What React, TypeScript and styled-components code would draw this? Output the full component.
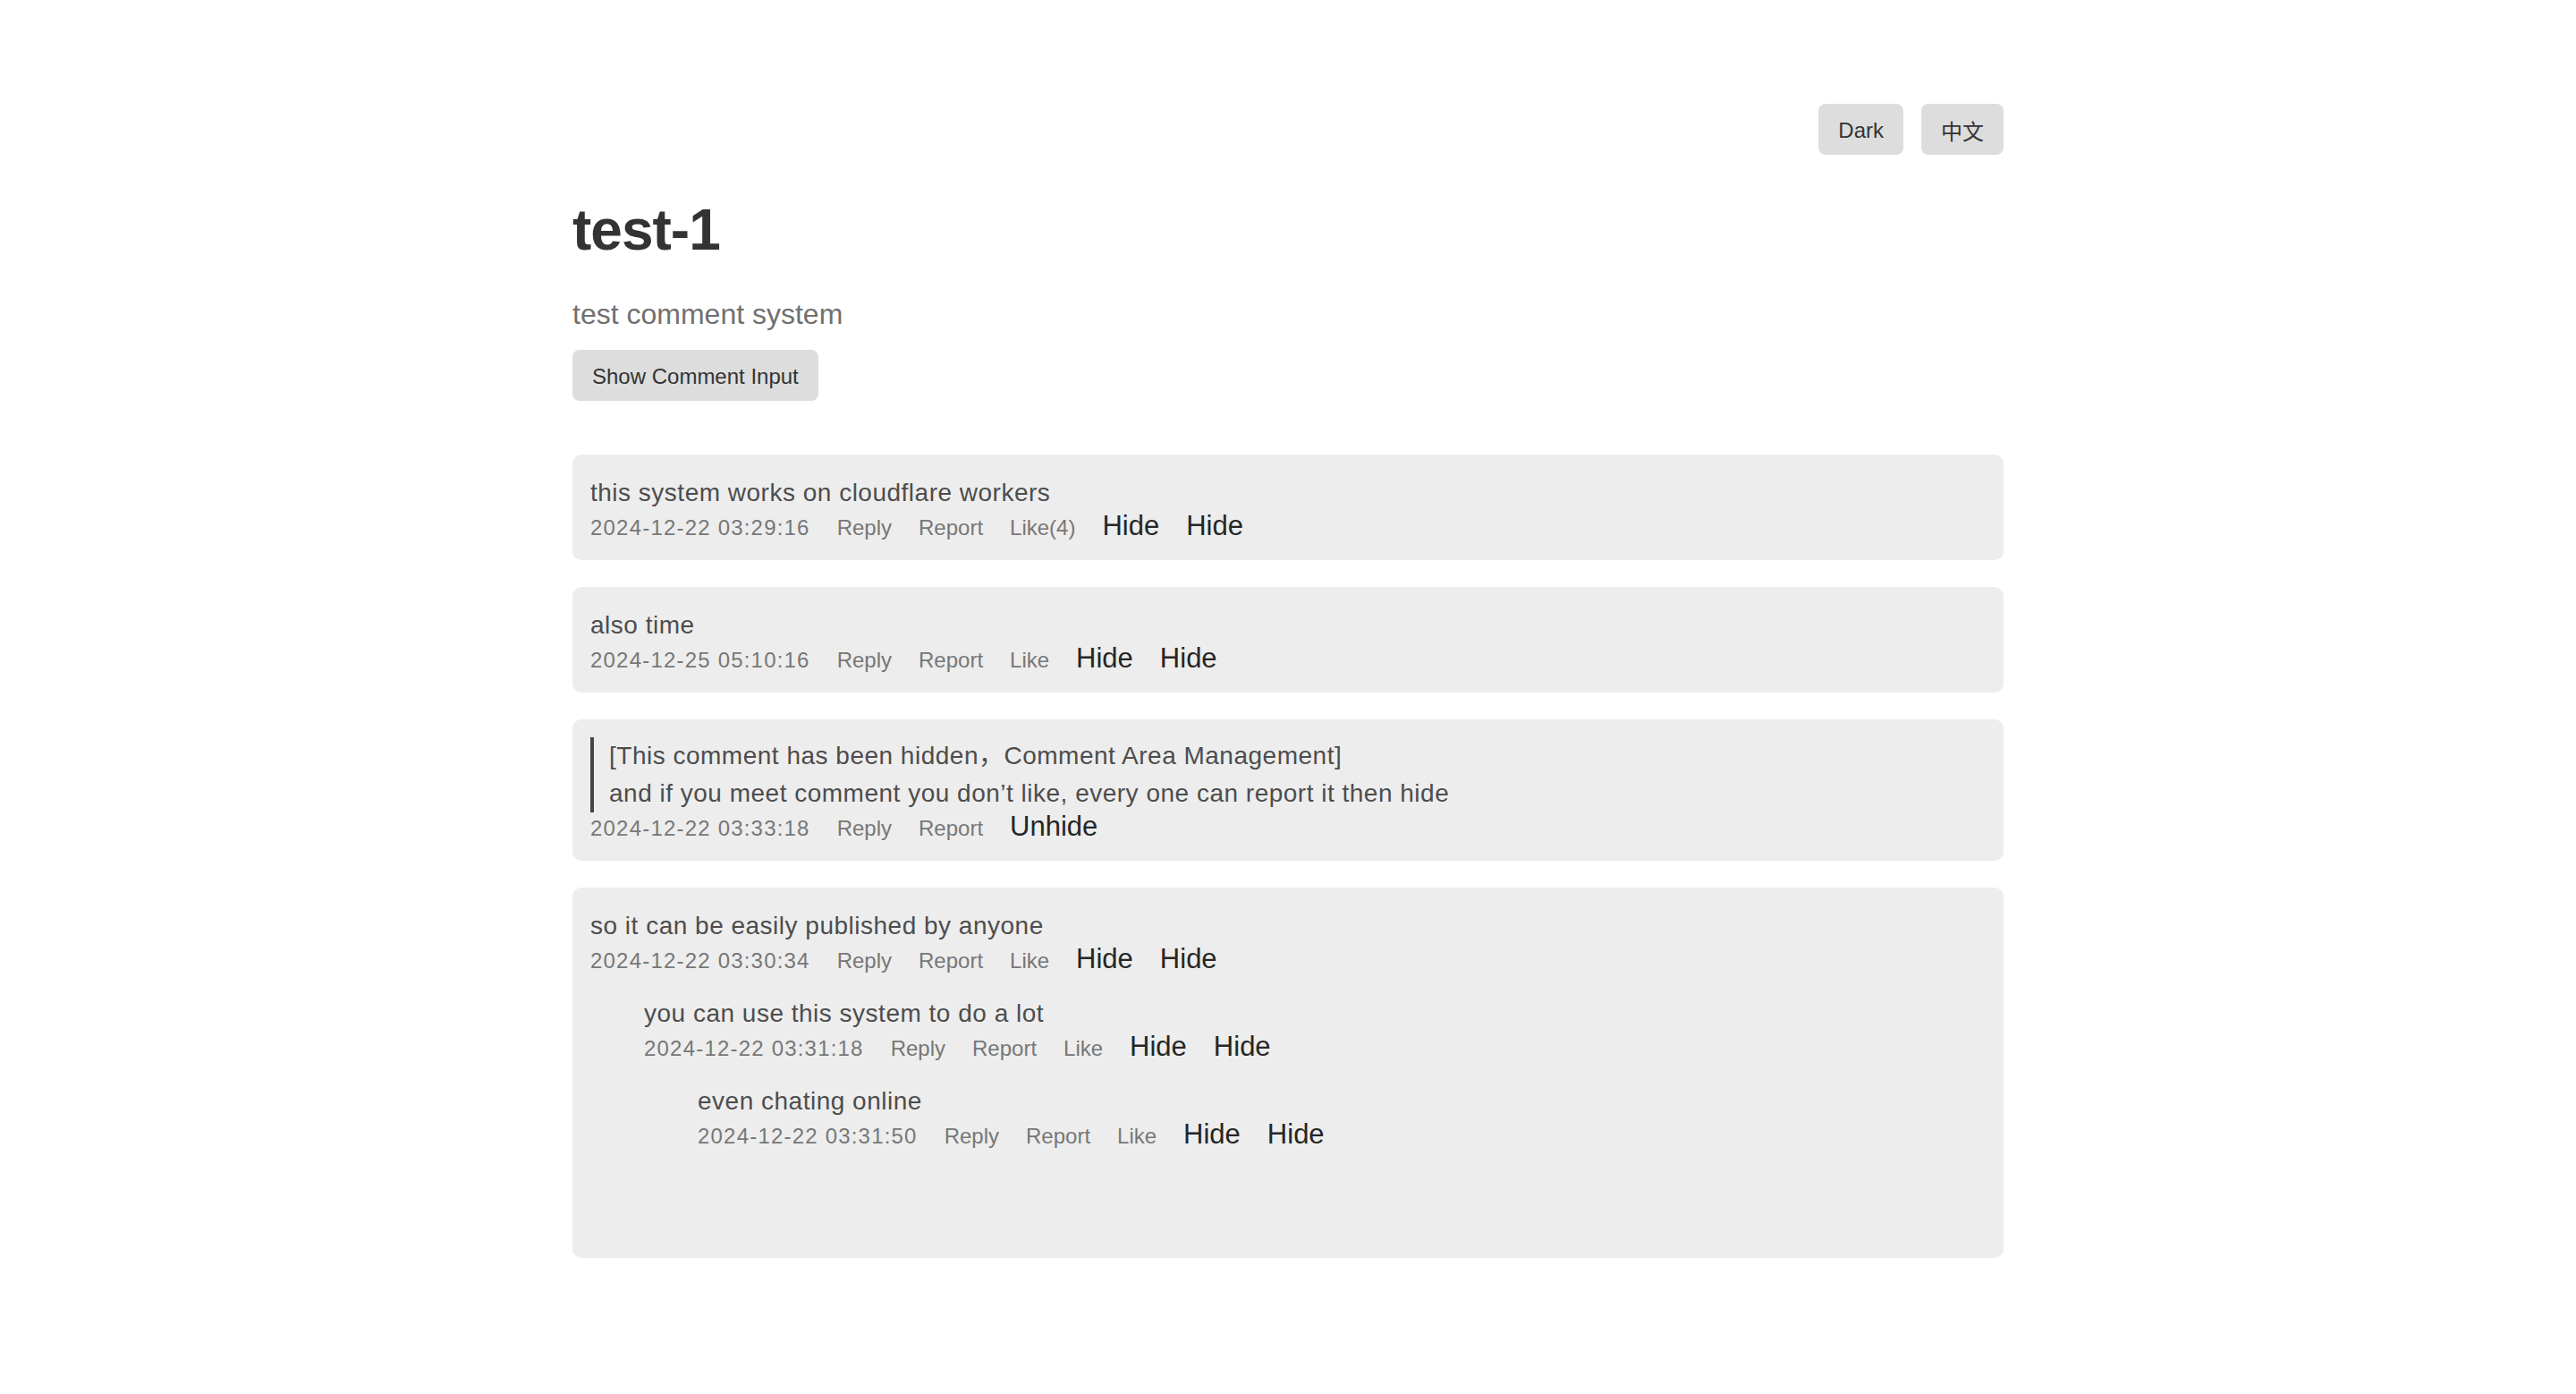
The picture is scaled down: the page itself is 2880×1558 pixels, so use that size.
import React from "react";
import styled, { createGlobalStyle } from "styled-components";

const GlobalStyle = createGlobalStyle`
  html, body {
    margin: 0;
    padding: 0;
    background: #ffffff;
  }
  body {
    font-family: "Liberation Sans", "Noto Sans CJK SC", Arial, sans-serif;
    color: #333333;
  }
`;

const Page = styled.div`
  max-width: 1600px;
  margin: 0 auto;
  padding: 116px 0 120px;
`;

const TopBar = styled.div`
  display: flex;
  justify-content: flex-end;
  gap: 20px;
`;

const PillButton = styled.button`
  height: 57px;
  padding: 0 22px;
  padding-top: 2px;
  border: none;
  border-radius: 8px;
  background: #dddddd;
  color: #333333;
  font-family: "Liberation Sans", "Noto Sans CJK SC", Arial, sans-serif;
  font-size: 24px;
  cursor: pointer;
`;

const ShowInputButton = styled(PillButton)`
  display: block;
  margin-top: 21px;
`;

const Title = styled.h1`
  margin: 47px 0 0;
  font-size: 64px;
  line-height: 74px;
  letter-spacing: -1px;
  font-weight: 700;
  color: #333333;
`;

const Subtitle = styled.p`
  margin: 39px 0 0;
  font-size: 32px;
  line-height: 37px;
  color: #707070;
`;

const CommentList = styled.div`
  margin-top: 60px;
  display: flex;
  flex-direction: column;
  gap: 30px;
`;

const Card = styled.div`
  background: #ededed;
  border-radius: 10px;
  padding: 20px 20px 22px;
`;

const Body = styled.div`
  padding-top: 2px;
  font-size: 28px;
  line-height: 42px;
  letter-spacing: 0.5px;
  color: #4d4d4d;
`;

const HiddenQuote = styled.blockquote`
  margin: 0;
  border-left: 4px solid #454545;
  padding-left: 17px;
  font-size: 28px;
  line-height: 42px;
  letter-spacing: 0.5px;
  color: #4d4d4d;
`;

const MetaRow = styled.div`
  display: flex;
  align-items: baseline;
  gap: 30px;
  height: 32px;
`;

const Timestamp = styled.span`
  font-size: 24px;
  line-height: 1;
  letter-spacing: 1.2px;
  color: #777777;
`;

const Action = styled.span`
  font-size: 24px;
  line-height: 1;
  color: #777777;
  cursor: pointer;
`;

const StrongAction = styled.span`
  font-size: 31px;
  line-height: 32px;
  color: #262626;
  cursor: pointer;
`;

const Replies = styled.div`
  margin-top: 22px;
  padding: 0 0 50px 60px;
`;

type CommentData = {
  text: string;
  time: string;
  likes?: number;
  hidden?: boolean;
  replies?: CommentData[];
};

const comments: CommentData[] = [
  { text: "this system works on cloudflare workers", time: "2024-12-22 03:29:16", likes: 4 },
  { text: "also time", time: "2024-12-25 05:10:16" },
  {
    text: "and if you meet comment you don\u2019t like, every one can report it then hide",
    time: "2024-12-22 03:33:18",
    hidden: true,
  },
  {
    text: "so it can be easily published by anyone",
    time: "2024-12-22 03:30:34",
    replies: [
      {
        text: "you can use this system to do a lot",
        time: "2024-12-22 03:31:18",
        replies: [{ text: "even chating online", time: "2024-12-22 03:31:50" }],
      },
    ],
  },
];

function Comment({ data }: { data: CommentData }) {
  return (
    <div>
      {data.hidden ? (
        <HiddenQuote>
          <div>[This comment has been hidden，Comment Area Management]</div>
          <div>{data.text}</div>
        </HiddenQuote>
      ) : (
        <Body>{data.text}</Body>
      )}
      <MetaRow>
        <Timestamp>{data.time}</Timestamp>
        <Action>Reply</Action>
        <Action>Report</Action>
        {data.hidden ? (
          <StrongAction>Unhide</StrongAction>
        ) : (
          <>
            <Action>{data.likes ? `Like(${data.likes})` : "Like"}</Action>
            <StrongAction>Hide</StrongAction>
            <StrongAction>Hide</StrongAction>
          </>
        )}
      </MetaRow>
      {data.replies && data.replies.length > 0 && (
        <Replies>
          {data.replies.map((r, i) => (
            <Comment key={i} data={r} />
          ))}
        </Replies>
      )}
    </div>
  );
}

export default function App() {
  return (
    <>
      <GlobalStyle />
      <Page>
        <TopBar>
          <PillButton>Dark</PillButton>
          <PillButton>中文</PillButton>
        </TopBar>
        <Title>test-1</Title>
        <Subtitle>test comment system</Subtitle>
        <ShowInputButton>Show Comment Input</ShowInputButton>
        <CommentList>
          {comments.map((c, i) => (
            <Card key={i}>
              <Comment data={c} />
            </Card>
          ))}
        </CommentList>
      </Page>
    </>
  );
}
